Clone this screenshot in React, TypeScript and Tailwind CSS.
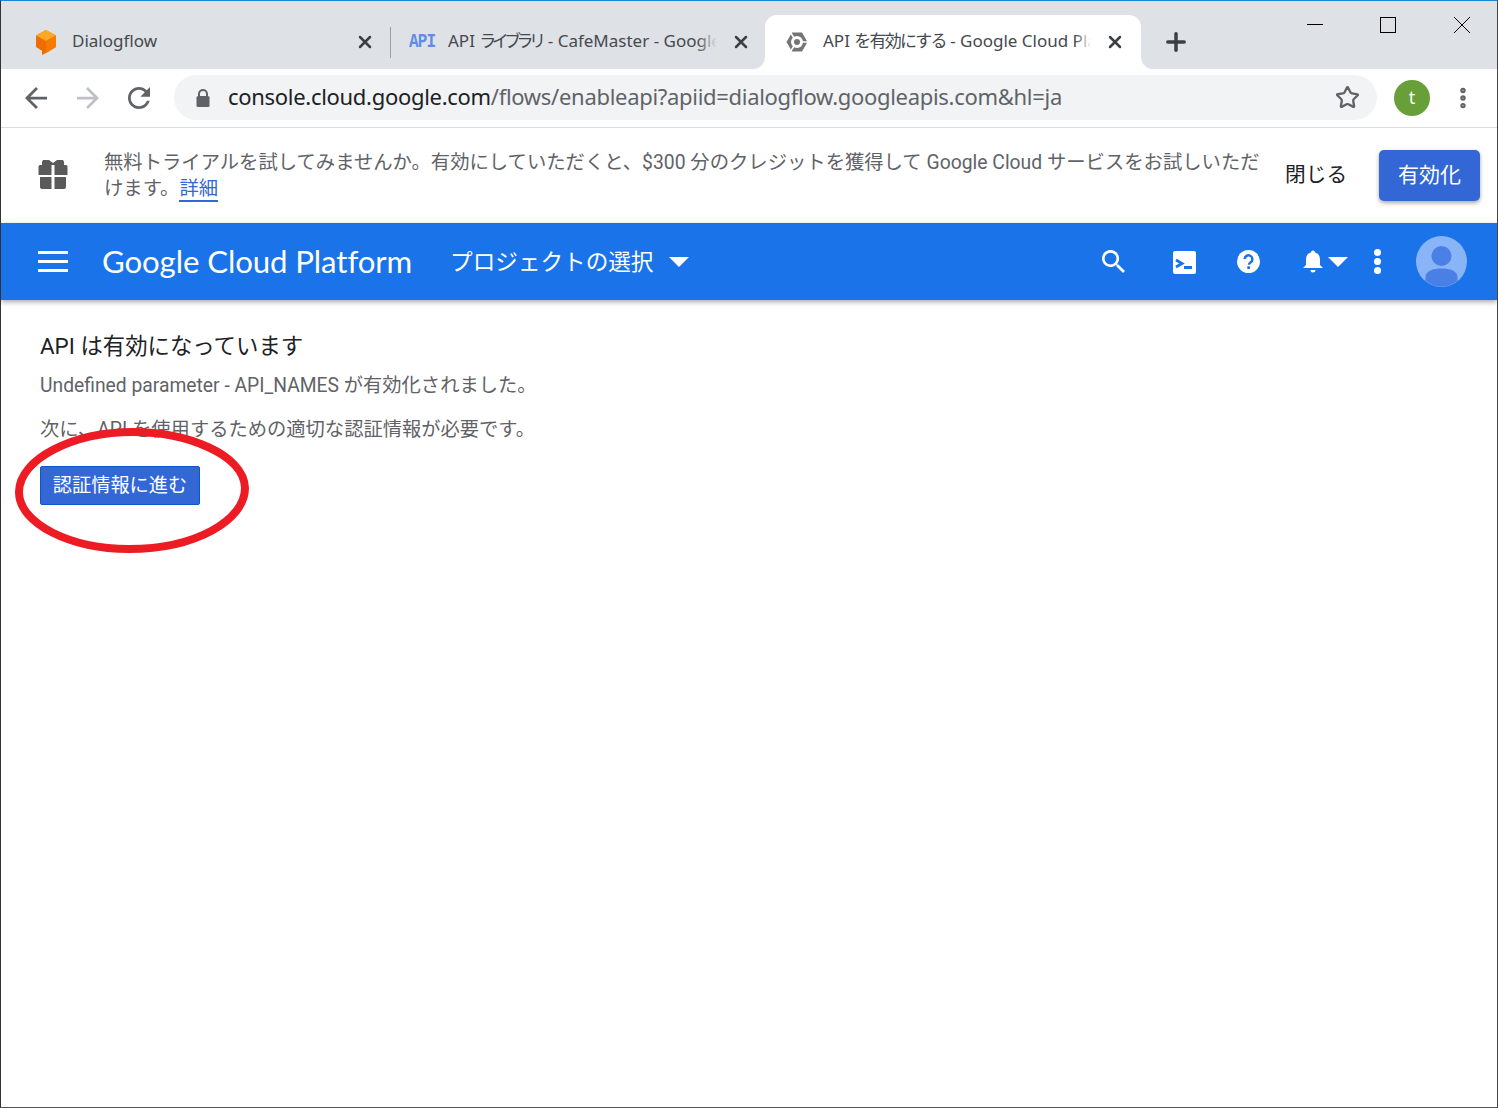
import React from "react";
import { Star, X, Plus, EllipsisVertical } from "lucide-react";

const F = "[font-family:'Noto_Sans','Noto_Sans_CJK_JP',sans-serif]";
const R = "[font-family:'Roboto','Noto_Sans_CJK_JP',sans-serif]";

function DialogflowIcon() {
  return (
    <svg width="22" height="26" viewBox="0 0 22 26" className="shrink-0">
      <path d="M11 1 L21 6.500 V18 L11 24 L7 26 V21.700 L1 18 V6.500 Z" fill="#ef6c00" />
      <path d="M11 1 L21 6.500 L11 12 L1 6.500 Z" fill="#ffa726" />
      <path d="M11 12 L21 6.500 V18 L11 24 Z" fill="#f57c00" />
    </svg>
  );
}

function CloudIcon() {
  return (
    <svg width="22" height="20" viewBox="0 0 22 20" className="shrink-0">
      <path d="M6 0.500 H16 L21.500 10 L16 19.500 H6 L0.500 10 Z" fill="#757575" />
      <circle cx="11" cy="10" r="6" fill="#fff" />
      <circle cx="11" cy="10" r="3" fill="#757575" />
      <path d="M8 6 L4.500 0.500 M15 10 H22 M8 14 L4.500 19.500" stroke="#fff" strokeWidth="1.500" />
    </svg>
  );
}

function CloseX() {
  return <X size={20} strokeWidth={3} className="text-[#3c4043] shrink-0" />;
}

function Nav({ d, size, className }: { d: string; size: number; className?: string }) {
  return (
    <svg width={size} height={size} viewBox="4 4 16 16" className={`shrink-0 ${className ?? ""}`}>
      <path d={d} fill="currentColor" />
    </svg>
  );
}

const ARROW_BACK = "M20 11H7.830l5.590-5.590L12 4l-8 8 8 8 1.410-1.410L7.830 13H20v-2z";
const ARROW_FORWARD = "M4 11h12.170l-5.590-5.590L12 4l8 8-8 8-1.410-1.410L16.170 13H4v-2z";
const REFRESH = "M17.650 6.350C16.200 4.900 14.210 4 12 4c-4.420 0-7.990 3.580-7.990 8s3.570 8 7.990 8c3.730 0 6.840-2.550 7.730-6h-2.080c-.82 2.330-3.040 4-5.650 4-3.310 0-6-2.690-6-6s2.690-6 6-6c1.660 0 3.140.69 4.220 1.780L13 11h7V4l-2.350 2.350z";
const SEARCH = "M15.500 14h-.79l-.28-.27C15.410 12.590 16 11.110 16 9.500 16 5.910 13.090 3 9.500 3S3 5.910 3 9.500 5.910 16 9.500 16c1.610 0 3.090-.59 4.230-1.570l.27.28v.79l5 4.990L20.490 19l-4.990-5zm-6 0C7.010 14 5 11.990 5 9.500S7.010 5 9.500 5 14 7.010 14 9.500 11.990 14 9.500 14z";

export default function App() {
  return (
    <div className={`relative w-[1498px] h-[1108px] overflow-hidden bg-white border-t border-l border-r border-b border-t-[#1a86d8] border-l-[#333] border-r-[#444] border-b-[#555] flex flex-col ${F}`}>
      {/* tab strip */}
      <div className="relative h-[68px] shrink-0 bg-[#dee1e6] pt-[14px] flex">
        <div className="flex items-center h-full w-[389px] pl-[34px] pr-[15px]">
          <DialogflowIcon />
          <span className="ml-[15px] text-[17px] leading-[24px] mb-[2px] text-[#45494e] flex-1 truncate">Dialogflow</span>
          <CloseX />
        </div>
        <div className="w-px h-[31px] mt-[12px] bg-[#9aa0a6]" />
        <div className="flex items-center h-full w-[374px] pl-[18px] pr-[14px]">
          <span className="inline-block font-['Liberation_Mono'] font-bold text-[#5f8ce8] text-[16px] leading-[20px] w-[26px] tracking-[-0.9px] scale-y-125 shrink-0">API</span>
          <span className="relative ml-[13px] mb-[2px] w-[271px] h-[24px] overflow-hidden whitespace-nowrap text-[17px] leading-[24px] text-[#45494e] mr-[14px]">
            API <span className="tracking-[-4.600px] mr-[2px]">ライブラリ</span> - CafeMaster - Google Cloud Platform
            <span className="absolute right-0 top-0 bottom-0 w-[20px] bg-linear-to-r from-transparent to-[#dee1e6]" />
          </span>
          <CloseX />
        </div>
        <div className="relative h-full w-[376px] bg-white rounded-t-[12px] flex items-center pl-[21px] pr-[16px]">
          <div className="absolute left-[-12px] bottom-0 w-[12px] h-[12px] bg-white">
            <div className="w-full h-full bg-[#dee1e6] rounded-br-[12px]" />
          </div>
          <div className="absolute right-[-12px] bottom-0 w-[12px] h-[12px] bg-white">
            <div className="w-full h-full bg-[#dee1e6] rounded-bl-[12px]" />
          </div>
          <CloudIcon />
          <span className="relative ml-[15px] mb-[2px] w-[272px] h-[24px] overflow-hidden whitespace-nowrap text-[17px] leading-[24px] text-[#45494e] mr-[14px]">
            API <span className="tracking-[-1.800px]">を有効にする</span> - Google Cloud Platform
            <span className="absolute right-0 top-0 bottom-0 w-[16px] bg-linear-to-r from-transparent to-white" />
          </span>
          <CloseX />
        </div>
        <Plus size={28} strokeWidth={3} className="text-[#3c4043] ml-[21px] mt-[13px] shrink-0" />
        <div className="ml-[117px] mt-[2px] flex gap-[57px] text-black items-start">
          <svg width="16" height="16" viewBox="0 0 16 16"><path d="M0 7.500H16" stroke="#000" strokeWidth="1" /></svg>
          <svg width="16" height="16" viewBox="0 0 16 16"><rect x="0.500" y="0.500" width="15" height="15" fill="none" stroke="#000" strokeWidth="1" /></svg>
          <svg width="16" height="16" viewBox="0 0 16 16" className="ml-px"><path d="M0 0L16 16M16 0L0 16" stroke="#000" strokeWidth="1" /></svg>
        </div>
      </div>

      {/* toolbar */}
      <div className="h-[59px] shrink-0 flex items-center bg-white border-b border-[#dadce0] pl-[24px] pb-[1px]">
        <Nav d={ARROW_BACK} size={22} className="text-[#5f6368]" />
        <Nav d={ARROW_FORWARD} size={22} className="text-[#bdc1c6] ml-[30px]" />
        <Nav d={REFRESH} size={22} className="text-[#5f6368] ml-[29px]" />
        <div className="ml-[24px] w-[1203px] h-[45px] rounded-full bg-[#f1f3f4] flex items-center pl-[22px] pr-[17px]">
          <svg width="14" height="18" viewBox="0 0 14 18" className="shrink-0">
            <path d="M3 8V5a4 4 0 0 1 8 0v3" fill="none" stroke="#5f6368" strokeWidth="2" />
            <rect x="0.500" y="7" width="13" height="11" rx="1.500" fill="#5f6368" />
          </svg>
          <span className="ml-[18px] mb-[2px] flex-1 whitespace-nowrap text-[22px] text-[#5f6368] tracking-[-0.3px]">
            <span className="text-[#202124]">console.cloud.google.com</span>/flows/enableapi?apiid=dialogflow.googleapis.com&amp;hl=ja
          </span>
          <Star size={25} strokeWidth={2.200} className="text-[#5f6368] shrink-0" />
        </div>
        <div className="ml-[17px] w-[36px] h-[36px] rounded-full bg-[#689f38] text-white text-[18px] flex items-center justify-center">t</div>
        <EllipsisVertical size={26} strokeWidth={3} className="text-[#5f6368] ml-[20px]" />
      </div>

      {/* banner */}
      <div className="h-[95px] shrink-0 flex items-center bg-white pl-[37px]">
        <svg width="30" height="30" viewBox="0 0 30 30" className="shrink-0 mb-[4px]">
          <path d="M5 1 H11 L15 4 L19 1 H25 Q27 3 26 6 H4 Q3 3 5 1Z" fill="#5a5a5a" />
          <path d="M2 6 H13.500 V16 H0.500 V8 Q0.500 6 2 6Z M16.500 6 H28 Q29.500 6 29.500 8 V16 H16.500Z M2 18 H13.500 V30 H4 Q2 30 2 28Z M16.500 18 H28 V28 Q28 30 26 30 H16.500Z" fill="#5a5a5a" />
        </svg>
        <p className={`ml-[36px] w-[1165px] text-[19.340px] leading-[26px] text-[#5f6368] ${R}`}>
          無料トライアルを試してみませんか。有効にしていただくと、$300 分のクレジットを獲得して Google Cloud サービスをお試しいただけます。<span className="text-[#3367d6] border-b-2 border-[#3367d6]">詳細</span>
        </p>
        <span className="ml-[16px] mb-[2px] text-[20.700px] text-[#202124] whitespace-nowrap">閉じる</span>
        <button className="ml-[32px] w-[101px] h-[51px] pb-[2px] rounded-[5px] bg-[#3367d6] text-white text-[21px] shadow-[0_2px_4px_rgba(0,0,0,0.35)]">有効化</button>
      </div>

      {/* blue app bar */}
      <div className="relative z-10 h-[77px] shrink-0 bg-[#1a73e8] flex items-center pl-[37px] shadow-[0_2px_5px_rgba(0,0,0,0.35)] text-white">
        <div className="w-[30px] flex flex-col gap-[6px]">
          <div className="h-[3px] bg-white" />
          <div className="h-[3px] bg-white" />
          <div className="h-[3px] bg-white" />
        </div>
        <span className="ml-[34px] text-[31.200px] font-['Lato'] whitespace-nowrap tracking-[-0.1px]">Google Cloud Platform</span>
        <span className="ml-[38px] text-[22.600px] whitespace-nowrap">プロジェクトの選択</span>
        <svg width="20" height="10" viewBox="0 0 20 10" className="ml-[16px] shrink-0"><path d="M0 0H20L10 10Z" fill="#fff" /></svg>
        <div className="ml-auto flex items-center pr-[30px]">
          <svg width="23" height="23" viewBox="3 3 17.500 17.500" className="mr-[48px] shrink-0 mb-[1px]"><path d={SEARCH} fill="#fff" /></svg>
          <svg width="23" height="23" viewBox="0 0 23 23" className="mr-[41px] shrink-0 mt-[1px]">
            <rect width="23" height="23" rx="2" fill="#fff" />
            <path d="M3 9 L9 12.500 L3 16" fill="none" stroke="#1a73e8" strokeWidth="2.800" />
            <rect x="11" y="15" width="8" height="3" fill="#1a73e8" />
          </svg>
          <svg width="23" height="23" viewBox="0 0 24 24" className="mr-[42px] shrink-0">
            <circle cx="12" cy="12" r="12" fill="#fff" />
            <path d="M8 9.500a4 4 0 1 1 6.300 3.300c-1.200.8-1.800 1.400-1.800 2.700" fill="none" stroke="#1a73e8" strokeWidth="2.600" />
            <rect x="10.800" y="17" width="2.800" height="2.800" fill="#1a73e8" />
          </svg>
          <svg width="22" height="26" viewBox="0 0 22 26" className="shrink-0">
            <path d="M11 1.500a2 2 0 0 1 2 2c3.500 1 5 3.500 5 7.500v5l3 3H1l3-3v-5c0-4 1.500-6.500 5-7.500a2 2 0 0 1 2-2Z" fill="#fff" />
            <path d="M8.500 21h5a2.500 2.500 0 0 1-5 0Z" fill="#fff" />
          </svg>
          <svg width="20" height="10" viewBox="0 0 20 10" className="ml-[4px] shrink-0"><path d="M0 0H20L10 10Z" fill="#fff" /></svg>
          <div className="ml-[26px] flex flex-col gap-[2px]">
            <div className="w-[7px] h-[7px] rounded-full bg-white" />
            <div className="w-[7px] h-[7px] rounded-full bg-white" />
            <div className="w-[7px] h-[7px] rounded-full bg-white" />
          </div>
          <svg width="51" height="51" viewBox="0 0 51 51" className="ml-[35px] shrink-0">
            <circle cx="25.500" cy="25.500" r="25.500" fill="#8ab4f8" />
            <circle cx="25.500" cy="20" r="10" fill="#4a7fe6" />
            <path d="M9.500 45 V41 C9.500 35 17 32.500 25.500 32.500 S41.500 35 41.500 41 V45 A25.500 25.500 0 0 1 9.500 45Z" fill="#4a7fe6" />
          </svg>
        </div>
      </div>

      {/* main */}
      <main className={`relative flex-1 pl-[39px] pt-[31px] bg-white ${R}`}>
        <h1 className="text-[22.400px] leading-[30px] text-[#202124] font-normal">API は有効になっています</h1>
        <p className="mt-[10px] text-[19.300px] leading-[30px] text-[#5f6368]">Undefined parameter - API_NAMES が有効化されました。</p>
        <p className="mt-[14px] text-[19.300px] leading-[30px] text-[#5f6368]">次に、API を使用するための適切な認証情報が必要です。</p>
        <button className="mt-[21px] w-[160px] h-[39px] pt-[1px] rounded-[2px] bg-[#3367d6] border border-[#1155cc] text-white text-[19.200px] flex items-center justify-center">認証情報に進む</button>
        <svg width="250" height="140" viewBox="0 0 250 140" className="absolute left-[10px] top-[124px]">
          <path d="M122 8 C175 8 233 30 234 64 C234 96 185 125 118 125 C60 125 8 100 8 68 C8 35 62 8 122 8Z" fill="none" stroke="#ed1c24" strokeWidth="8" />
        </svg>
      </main>
    </div>
  );
}
